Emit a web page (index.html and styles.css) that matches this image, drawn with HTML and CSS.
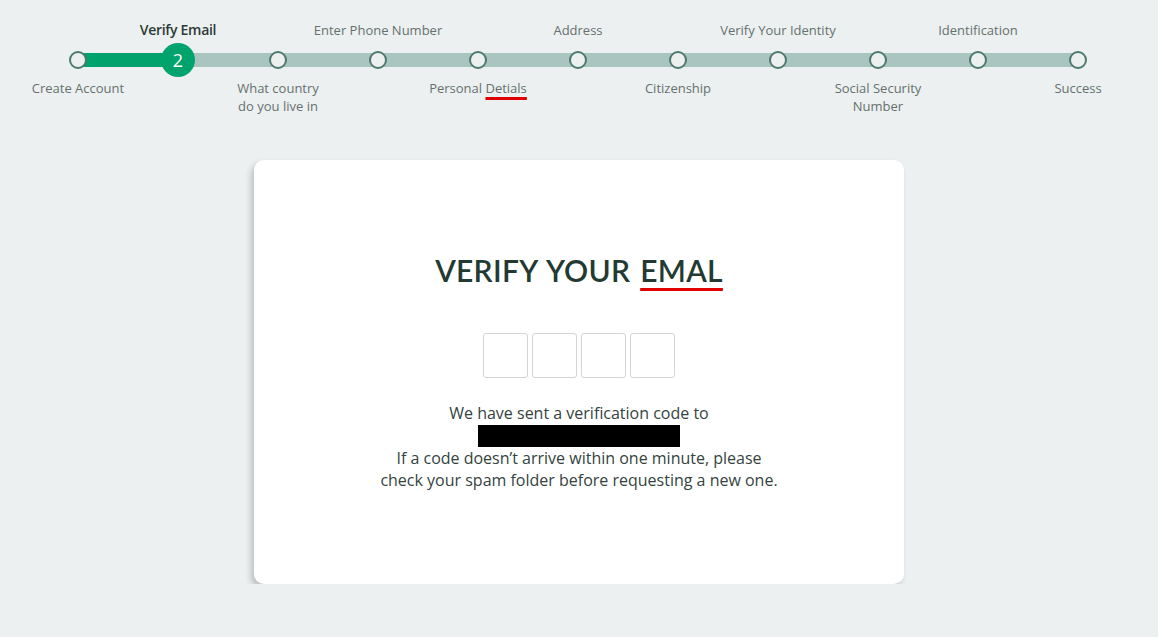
FILE: index.html
```html
<!DOCTYPE html>
<html lang="en">
<head>
  <meta charset="UTF-8" />
  <title>Verify Email</title>
  <link rel="stylesheet" href="styles.css">
</head>
<body>

  <div class="stepper">
    <div class="step done">
      <div class="top-label"></div>
      <div class="dot-cell"><span class="dot"></span></div>
      <div class="bottom-label">Create Account</div>
    </div>
    <div class="step active">
      <div class="top-label"><span>Verify Email</span></div>
      <div class="dot-cell"><span class="dot big">2</span></div>
      <div class="bottom-label"></div>
    </div>
    <div class="step">
      <div class="top-label"></div>
      <div class="dot-cell"><span class="dot"></span></div>
      <div class="bottom-label">What country<br>do you live in</div>
    </div>
    <div class="step">
      <div class="top-label"><span>Enter Phone Number</span></div>
      <div class="dot-cell"><span class="dot"></span></div>
      <div class="bottom-label"></div>
    </div>
    <div class="step">
      <div class="top-label"></div>
      <div class="dot-cell"><span class="dot"></span></div>
      <div class="bottom-label"><span>Personal <span class="typo">Detials</span></span></div>
    </div>
    <div class="step">
      <div class="top-label"><span>Address</span></div>
      <div class="dot-cell"><span class="dot"></span></div>
      <div class="bottom-label"></div>
    </div>
    <div class="step">
      <div class="top-label"></div>
      <div class="dot-cell"><span class="dot"></span></div>
      <div class="bottom-label">Citizenship</div>
    </div>
    <div class="step">
      <div class="top-label"><span>Verify Your Identity</span></div>
      <div class="dot-cell"><span class="dot"></span></div>
      <div class="bottom-label"></div>
    </div>
    <div class="step">
      <div class="top-label"></div>
      <div class="dot-cell"><span class="dot"></span></div>
      <div class="bottom-label">Social Security<br>Number</div>
    </div>
    <div class="step">
      <div class="top-label"><span>Identification</span></div>
      <div class="dot-cell"><span class="dot"></span></div>
      <div class="bottom-label"></div>
    </div>
    <div class="step">
      <div class="top-label"></div>
      <div class="dot-cell"><span class="dot"></span></div>
      <div class="bottom-label">Success</div>
    </div>
  </div>

  <div class="card">
    <h1>VERIFY YOUR <span class="typo">EMAL</span></h1>

    <div class="code-inputs">
      <input type="text" maxlength="1" />
      <input type="text" maxlength="1" />
      <input type="text" maxlength="1" />
      <input type="text" maxlength="1" />
    </div>

    <p class="info">
      We have sent a verification code to
      <span class="redacted"></span>
      If a code doesn’t arrive within one minute, please<br>
      check your spam folder before requesting a new one.
    </p>
  </div>

</body>
</html>
```

FILE: styles.css
```css
body {
  margin: 0;
  font-family: 'Open Sans', sans-serif;
  background: #ecf0f0;
  color: #2f3f3b;
}

/* stepper */
.stepper {
  display: flex;
  width: 1100px;
  margin-left: 28px;
  padding-top: 21px;
  background: linear-gradient(to right,
      transparent 50px,
      #00a36c 50px, #00a36c 150px,
      #aac4c0 150px, #aac4c0 1050px,
      transparent 1050px) no-repeat 0 53px / 100% 14px;
}

.step {
  width: 100px;
  display: flex;
  flex-direction: column;
  align-items: center;
  font-size: 13px;
  line-height: 18px;
  color: #66706e;
}

.top-label {
  height: 18px;
  display: flex;
  justify-content: center;
  white-space: nowrap;
}

.step.active .top-label {
  font-size: 14px;
  font-weight: 600;
  color: #2c3a37;
  letter-spacing: -0.3px;
}

.dot-cell {
  height: 34px;
  margin-top: 4px;
  display: flex;
  align-items: center;
  justify-content: center;
}

.dot {
  width: 14px;
  height: 14px;
  border: 2px solid #4e7a6f;
  border-radius: 50%;
  background: #ecf0ee;
}

.dot.big {
  width: 34px;
  height: 34px;
  border: none;
  background: #00a36c;
  color: #fff;
  font-size: 18px;
  line-height: 34px;
  text-align: center;
}

.bottom-label {
  margin-top: 2px;
  display: flex;
  justify-content: center;
  text-align: center;
  white-space: nowrap;
}

.typo {
  text-decoration: underline;
  text-decoration-color: #e00000;
  text-decoration-thickness: 3px;
  text-underline-offset: 4px;
  text-decoration-skip-ink: none;
}

/* card */
.card {
  width: 650px;
  height: 424px;
  box-sizing: border-box;
  margin: 45px auto 0;
  padding-top: 92px;
  background: #fff;
  border-radius: 10px;
  box-shadow: -3px 4px 6px rgba(0, 0, 0, 0.2);
  text-align: center;
}

.card h1 {
  margin: 0;
  font-family: 'Lato', sans-serif;
  font-size: 30px;
  line-height: 36px;
  font-weight: 600;
  letter-spacing: 0.3px;
  word-spacing: 2px;
  color: #233a33;
}

.card h1 .typo {
  text-underline-offset: 6px;
}

.code-inputs {
  display: flex;
  justify-content: center;
  gap: 4px;
  margin-top: 45px;
}

.code-inputs input {
  width: 45px;
  height: 45px;
  box-sizing: border-box;
  border: 1px solid #d4d4d4;
  border-radius: 3px;
  background: #fff;
}

.info {
  margin: 24px 0 0;
  font-size: 16px;
  line-height: 22px;
  color: #344340;
}

.redacted {
  display: block;
  width: 202px;
  height: 22px;
  margin: 1px auto 0;
  background: #000;
}
```
